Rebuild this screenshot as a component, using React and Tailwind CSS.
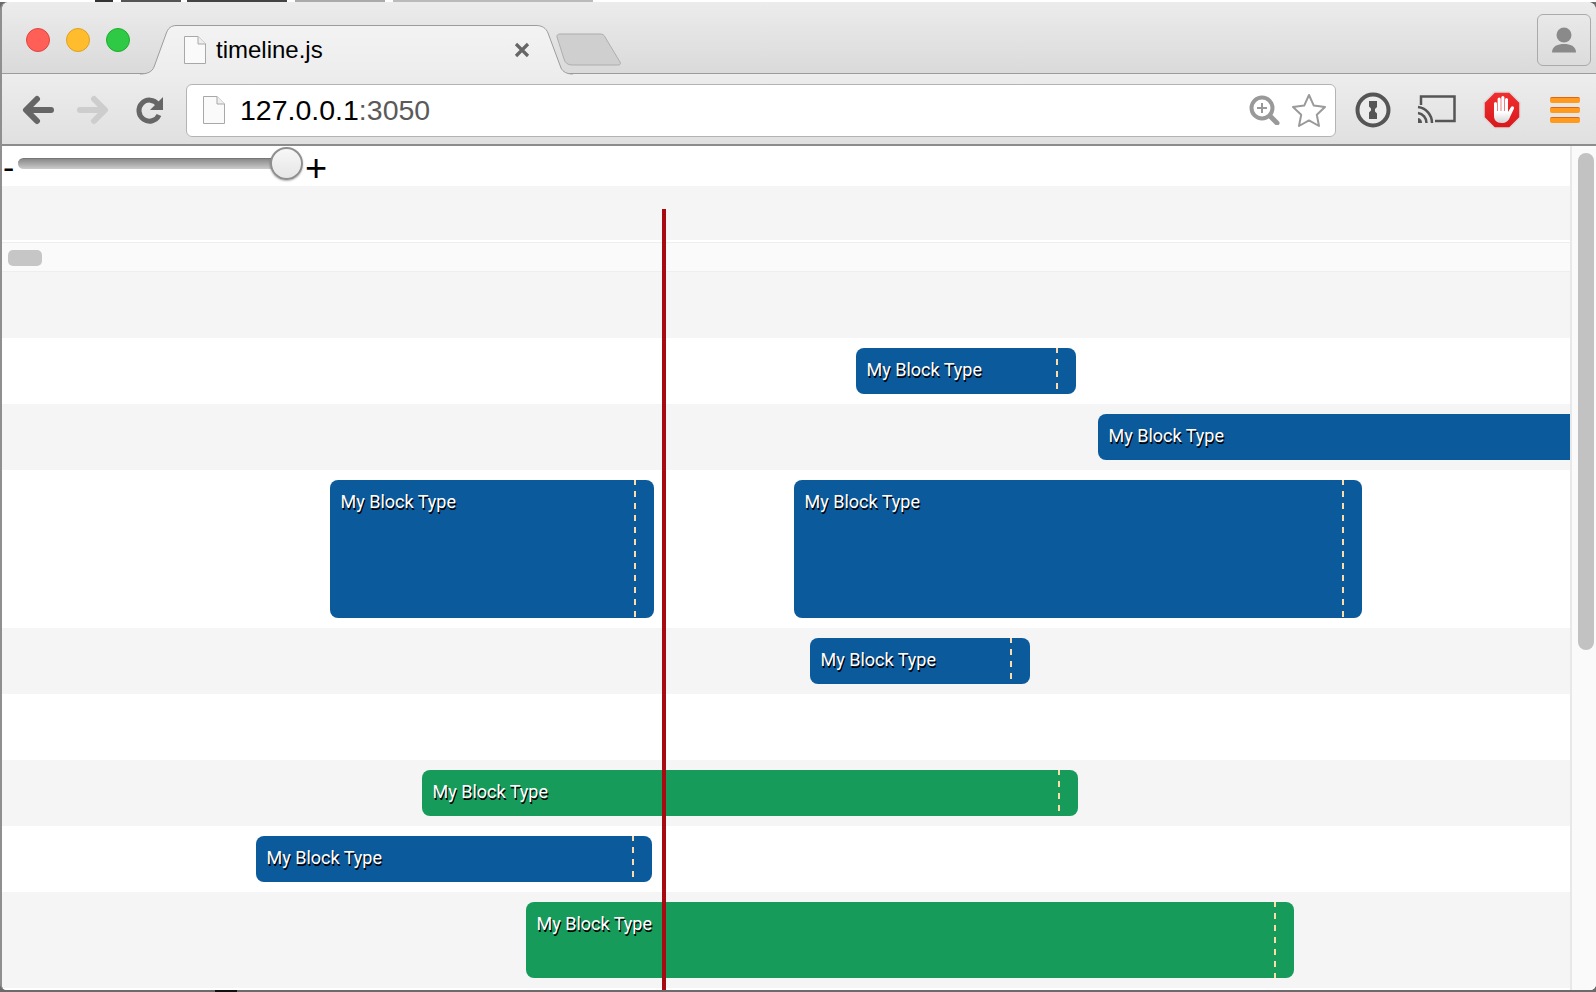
const Bar = ({ className }) => (
  <div className={`flex justify-between shrink-0 rounded-[8px] pl-[10.5px] pr-[18px] pt-[10px] ${className}`}>
    <span className="font-['Roboto',sans-serif] text-[18px] leading-[24px] text-white [text-shadow:1px_1.5px_0_#000]">My Block Type</span>
    <div className="-mt-[10px] w-[2px] bg-[repeating-linear-gradient(to_bottom,#fddca8_0_5px,transparent_5px_11px,#fddca8_11px_12px)]"></div>
  </div>
);

const PageIcon = ({ className }) => (
  <svg className={className} width="24" height="30" viewBox="0 0 24 30">
    <path d="M1.5 1.5H15L22.5 9V28.5H1.5Z" fill="#fafafa" stroke="#a8a8a8" />
    <path d="M15 1.5V9H22.5" fill="#eeeeee" stroke="#a8a8a8" />
  </svg>
);

const Toolbar = () => (
  <div className="flex h-[72px] shrink-0 items-center border-b-2 border-[#8c8c8c] bg-linear-to-b from-[#ededed] to-[#e0e0e0] pt-[2px]">
    {/* back */}
    <svg className="ml-[19px]" width="34" height="30" viewBox="0 0 34 30">
      <path d="M30 15H7M16 4L5 15L16 26" fill="none" stroke="#666" strokeWidth="6" strokeLinecap="round" strokeLinejoin="round" />
    </svg>
    {/* forward */}
    <svg className="ml-[21px]" width="34" height="30" viewBox="0 0 34 30">
      <path d="M4 15H27M18 4L29 15L18 26" fill="none" stroke="#cdcdcd" strokeWidth="6" strokeLinecap="round" strokeLinejoin="round" />
    </svg>
    {/* reload */}
    <svg className="ml-[25px]" width="30" height="30" viewBox="0 0 30 30">
      <path d="M23 9.5A10.5 10.5 0 1 0 24 20" fill="none" stroke="#666" strokeWidth="5" />
      <path d="M28 2V15H15Z" fill="#666" />
    </svg>
    {/* url box */}
    <div className="ml-[21px] flex h-[53px] w-[1150px] items-center rounded-[6px] border border-[#b4b4b4] bg-white pl-[15px] pr-[8px]">
      <PageIcon />
      <div className="ml-[14px] mt-[1px] flex-1 text-[28.5px] leading-none text-black">
        127.0.0.1<span className="text-[#5a5a5a]">:3050</span>
      </div>
      <svg className="mr-[11px]" width="32" height="30" viewBox="0 0 32 30">
        <circle cx="14" cy="13" r="10.5" fill="none" stroke="#999" strokeWidth="4" />
        <path d="M22 21L29 28" stroke="#999" strokeWidth="5" strokeLinecap="round" />
        <path d="M14 8V18M9 13H19" stroke="#999" strokeWidth="2" />
      </svg>
      <svg width="36" height="35" viewBox="0 0 36 35">
        <path d="M18 2L22.8 12.6L34 14L25.8 21.8L28 33L18 27.4L8 33L10.2 21.8L2 14L13.2 12.6Z" fill="#fff" stroke="#9a9a9a" strokeWidth="2" strokeLinejoin="round" />
      </svg>
    </div>
    {/* 1password */}
    <svg className="ml-[19px]" width="36" height="36" viewBox="0 0 36 36">
      <circle cx="18" cy="18" r="15.5" fill="#ebebeb" stroke="#555" strokeWidth="4" />
      <path d="M14 9H22V15L20 17V19.5L22 21.5V27H14V20.5L16 18.5V16.5L14 14.5Z" fill="#555" />
    </svg>
    {/* cast */}
    <svg className="ml-[26px]" width="40" height="32" viewBox="0 0 40 32">
      <path d="M4 11V2.5H37.5V27H18" fill="none" stroke="#555" strokeWidth="2.5" />
      <path d="M1 13A16 16 0 0 1 15 29M1 19A10 10 0 0 1 9.5 29" fill="none" stroke="#555" strokeWidth="2.5" />
      <path d="M1 24A5 5 0 0 1 5 29H1Z" fill="#555" />
    </svg>
    {/* adblock */}
    <svg className="ml-[26px]" width="38" height="38" viewBox="0 0 38 38">
      <defs>
        <linearGradient id="stopRed" x1="0" y1="0" x2="0" y2="1">
          <stop offset="0" stopColor="#f0302f" />
          <stop offset="1" stopColor="#d8181c" />
        </linearGradient>
        <linearGradient id="handFill" x1="0" y1="0" x2="0" y2="1">
          <stop offset="0.35" stopColor="#fff" />
          <stop offset="1" stopColor="#d4d4d4" />
        </linearGradient>
      </defs>
      <path d="M11.5 1H26.5L37 11.5V26.5L26.500 37H11.5L1 26.5V11.5Z" fill="url(#stopRed)" stroke="#dcdcdc" strokeWidth="1.5" />
      <rect x="11" y="11" width="3" height="14" rx="1.5" fill="#fff" />
      <rect x="14.600" y="6.500" width="3.100" height="16" rx="1.5" fill="#fff" />
      <rect x="18.300" y="5" width="3.100" height="16" rx="1.5" fill="#fff" />
      <rect x="22" y="7" width="3" height="16" rx="1.5" fill="#fff" />
      <path d="M11 20H25V21L28 16C29 14.500 31.500 15.500 31 17.500L27 26C25.500 30 23 32 18.500 32C13.500 32 11 29 11 25Z" fill="url(#handFill)" />
    </svg>
    {/* menu */}
    <div className="ml-[29px] flex w-[30px] flex-col gap-[4px]">
      <div className="h-[6px] rounded-[2px] border-t border-[#e0650f] bg-[#ff9a1f]"></div>
      <div className="h-[6px] rounded-[2px] border-t border-[#e0650f] bg-[#ff9a1f]"></div>
      <div className="h-[6px] rounded-[2px] border-t border-[#e0650f] bg-[#ff9a1f]"></div>
    </div>
  </div>
);

const TabStrip = () => (
  <div className="relative flex h-[72px] shrink-0 rounded-t-[8px] border-b border-[#9c9c9c] bg-linear-to-b from-[#ececec] to-[#dadada]">
    <div className="ml-[23.5px] mt-[26px] flex h-[24px] gap-[16.25px]">
      <div className="size-[24px] rounded-full border border-[#e0443e] bg-[#ff5f57]"></div>
      <div className="size-[24px] rounded-full border border-[#dea123] bg-[#ffbd2e]"></div>
      <div className="size-[24px] rounded-full border border-[#1dad2b] bg-[#2fca45]"></div>
    </div>
    {/* active tab */}
    <div className="relative z-10 ml-[10px] mt-[23px] flex h-[50px] w-[433px] shrink-0">
      <svg className="absolute inset-0" width="433" height="50" viewBox="0 0 433 50">
        <defs>
          <linearGradient id="tabFill" x1="0" y1="0" x2="0" y2="1">
            <stop offset="0" stopColor="#f3f3f3" />
            <stop offset="1" stopColor="#ededed" />
          </linearGradient>
        </defs>
        <path d="M0 50V49C7 49 12 47 14 42L26 9C28 3 31 .5 37 .5H396C402 .5 406 3 408 8L421 43C423 47 427 49 433 49V50Z" fill="url(#tabFill)" />
        <path d="M0 49C7 49 12 47 14 42L26 9C28 3 31 .5 37 .5H396C402 .5 406 3 408 8L421 43C423 47 427 49 433 49" fill="none" stroke="#9c9c9c" />
      </svg>
      <div className="relative ml-[43px] mt-[10px] flex h-[30px] items-center">
        <PageIcon />
        <span className="ml-[9px] w-[298px] text-[24px] leading-none text-black">timeline.js</span>
        <svg width="16" height="16" viewBox="0 0 16 16">
          <path d="M2 2L14 14M14 2L2 14" stroke="#666" strokeWidth="3.2" />
        </svg>
      </div>
    </div>
    {/* new tab button */}
    <svg className="-ml-[17px] mt-[31px]" width="68" height="34" viewBox="0 0 68 34">
      <path d="M1 4C.5 2 2 1 4 1H44C47 1 48 2 49 4L64 29C65 31 64 32 62 32H16C12 32 9 30 8 26Z" fill="#cfcfcf" stroke="#adadad" />
    </svg>
    <div className="flex-1"></div>
    {/* profile */}
    <div className="mr-[5px] mt-[12px] flex h-[52px] w-[54px] items-center justify-center rounded-[6px] border border-[#aaaaaa]">
      <svg width="26" height="26" viewBox="0 0 26 26">
        <circle cx="13" cy="8" r="7.500" fill="#8a8a8a" />
        <path d="M1 25.500C1 19 7 17 13 17C19 17 25 19 25 25.500Z" fill="#8a8a8a" />
      </svg>
    </div>
  </div>
);

const Content = () => (
  <div className="flex min-h-0 flex-1 bg-white">
    <div className="relative min-w-0 flex-1 overflow-hidden">
      {/* zoom slider */}
      <div className="flex h-[40px] items-start text-[34px] leading-none text-black">
        <span className="ml-[1px] mt-[4px] w-[15px]">-</span>
        <div className="mt-[12px] h-[11px] w-[260px] rounded-full border-t border-[#777] bg-linear-to-b from-[#8a8a8a] to-[#cccccc]"></div>
        <div className="-ml-[8px] mt-[1px] size-[33px] shrink-0 rounded-full border-2 border-[#8f8f8f] bg-linear-to-b from-[#f7f7f7] to-[#e6e6e6] shadow-[0_1px_2px_rgba(0,0,0,0.3)]"></div>
        <span className="ml-[2px] mt-[3px] text-[38px]">+</span>
      </div>
      <div className="h-[54px] bg-[#f5f5f5]"></div>
      {/* horizontal scroller */}
      <div className="h-[32px] border-t-2 border-white">
        <div className="h-[30px] border-y border-[#eeeeee] bg-[#fafafa] pl-[6px] pt-[7px]">
          <div className="h-[16px] w-[34px] rounded-[5px] bg-[#c6c6c6]"></div>
        </div>
      </div>
      <div className="h-[66px] bg-[#f5f5f5]"></div>
      <div className="flex h-[66px] items-start pt-[10px]">
        <Bar className="ml-[854px] h-[46px] w-[220px] bg-[#0b5a9c]" />
      </div>
      <div className="flex h-[66px] items-start bg-[#f5f5f5] pt-[10px]">
        <Bar className="ml-[1096px] h-[46px] w-[600px] bg-[#0b5a9c]" />
      </div>
      <div className="flex h-[158px] items-start pt-[10px]">
        <Bar className="ml-[328px] h-[138px] w-[324px] bg-[#0b5a9c]" />
        <Bar className="ml-[140px] h-[138px] w-[568px] bg-[#0b5a9c]" />
      </div>
      <div className="flex h-[66px] items-start bg-[#f5f5f5] pt-[10px]">
        <Bar className="ml-[808px] h-[46px] w-[220px] bg-[#0b5a9c]" />
      </div>
      <div className="h-[66px]"></div>
      <div className="flex h-[66px] items-start bg-[#f5f5f5] pt-[10px]">
        <Bar className="ml-[420px] h-[46px] w-[656px] bg-[#179b5b]" />
      </div>
      <div className="flex h-[66px] items-start pt-[10px]">
        <Bar className="ml-[254px] h-[46px] w-[396px] bg-[#0b5a9c]" />
      </div>
      <div className="flex h-[96px] items-start bg-[#f5f5f5] pt-[10px]">
        <Bar className="ml-[524px] h-[76px] w-[768px] bg-[#179b5b]" />
      </div>
      {/* playhead */}
      <div className="absolute bottom-0 left-[660px] top-[63px] w-[4px] bg-[#a80a12]"></div>
    </div>
    {/* page scrollbar */}
    <div className="w-[26px] shrink-0 border-l-2 border-[#e8e8e8] bg-[#fafafa] pl-[6px] pr-[2px] pt-[7px]">
      <div className="h-[497px] rounded-full bg-[#c2c2c2]"></div>
    </div>
  </div>
);

function App() {
  return (
    <div className="flex h-[992px] w-[1596px] flex-col overflow-hidden bg-[#6b6b6b] font-['Liberation_Sans',sans-serif]">
      {/* bits of the page behind the window */}
      <div className="flex h-[2px] shrink-0 bg-white">
        <div className="ml-[95px] h-[2px] w-[18px] bg-[#333]"></div>
        <div className="ml-[8px] h-[2px] w-[60px] bg-[#555]"></div>
        <div className="ml-[6px] h-[2px] w-[100px] bg-[#444]"></div>
        <div className="ml-[8px] h-[2px] w-[90px] bg-[#aaa]"></div>
        <div className="ml-[8px] h-[2px] w-[200px] bg-[#bbb]"></div>
      </div>
      <div className="flex h-[988px] shrink-0 flex-col overflow-hidden rounded-t-[8px] rounded-b-[6px] border-l-2 border-[#8f8f8f] bg-white">
        <TabStrip />
        <Toolbar />
        <Content />
      </div>
      <div className="ml-[215px] h-[2px] w-[22px] shrink-0 bg-[#111]"></div>
    </div>
  );
}

export default App;
